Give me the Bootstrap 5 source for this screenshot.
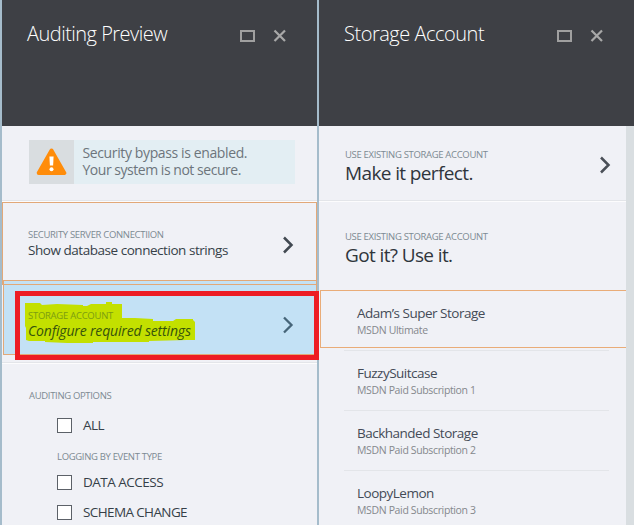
<!DOCTYPE html>
<html lang="en">
<head>
<meta charset="utf-8">
<meta name="viewport" content="width=device-width, initial-scale=1">
<title>Auditing Preview</title>
<link href="https://cdn.jsdelivr.net/npm/bootstrap@5.3.0/dist/css/bootstrap.min.css" rel="stylesheet">
<style>
body{font-family:"Open Sans","Noto Sans",sans-serif;background:#f0f1f6;color:#363f48;width:634px;height:525px}
.blade{width:317px;height:525px;border-left:2px solid #a5bccb;background:#f0f1f6}
.blade-head{height:126px;background:#3e4045;padding:20px 30px 0 25px;flex:none}
.blade-title{font-size:20px;line-height:28px;font-weight:300;color:#fff;white-space:nowrap;margin:0;letter-spacing:-.48px}
.t-aud{letter-spacing:-.52px}
.tools{gap:18px;padding-top:9px}
.tools svg{display:block}
.notice{margin:14px 22px 0 27px;height:44px;background:#e3eef3;color:#6d757c;flex:none}
.notice-icon{width:45px;background:#d9dde0}
.notice-text{padding:4px 0 0 8.5px;font-size:14px;line-height:17px;white-space:nowrap;letter-spacing:-.38px}
.n2{letter-spacing:-.47px}
.cap{font-size:9.5px;line-height:12px;color:#7d8a92;white-space:nowrap;letter-spacing:-.33px}
.lead-row{font-size:14px;line-height:17px;white-space:nowrap}
.rule{height:2px;background:#e3e5e9;border-bottom:1px solid #fcfcfd;flex:none}
.rule-a{margin-top:16px}
.rule-b{margin-top:7px}
.tile{border:1px solid #e2a878;flex:none}
.tile-conn{height:83px;padding:26px 22px 0 25px;position:relative;z-index:1}
.tile-conn svg{margin-top:7px}
.l-conn{font-size:13.5px;letter-spacing:-.46px;padding-top:1px}
.tile-store{height:75px;margin:-5px 0 0 1px;background:#c3e1f5;padding:29px 22px 0 24px}
.tile-store svg{margin-top:6px}
.l-store{letter-spacing:-.16px}
.callout-box{position:absolute;left:15px;top:291px;width:304px;height:69px;border:5px solid #ed1c24;z-index:3}
.marker{position:absolute;left:25px;top:302px;z-index:1}
.over{position:relative;z-index:2}
.tile-store .cap{color:#7b9d10;letter-spacing:-.27px}
.tile-store .lead-row{color:#36530c;font-style:italic}
.opts{padding:26px 0 0 27px}
.opt-list{padding-left:28px}
.opt{height:15px;gap:11px;font-size:13.5px;line-height:15px;white-space:nowrap;letter-spacing:-.5px}
.opt .form-check-input{width:15px;height:15px;margin:0;border:1px solid #5c6168;border-radius:0;background:#fff;flex:none}
.o1{margin-top:16px}
.c-log{margin-top:18px}
.o2{margin-top:12px}
.o3{margin-top:15px;letter-spacing:-.62px}
.acct{padding:0 15px 0 26px;flex:none}
.acct-new{height:74px;padding-top:23px}
.acct-new svg{margin-top:7px}
.acct-old{height:88px;padding-top:29px}
.pick{font-size:19px;line-height:24px;color:#2f353c;white-space:nowrap;letter-spacing:-.62px}
.store{height:60px;margin:0 17px 0 25px;border-bottom:1px solid #e3e5e9;padding:14px 0 0 13px;flex:none}
.store-gap{height:3px;padding:0}
.store-name{font-size:13.5px;line-height:17px;color:#444b57;white-space:nowrap;letter-spacing:-.5px}
.store-sub{font-size:10.5px;line-height:16px;color:#85888d;white-space:nowrap;letter-spacing:-.36px}
.track{width:8px;background:#d9dee1}
.store-sel{height:58px;border:1px solid #e9ac78;border-right:0;margin-left:1px;padding:14px 0 0 36px;flex:none}
</style>
<script src="https://cdn.jsdelivr.net/npm/bootstrap@5.3.0/dist/js/bootstrap.bundle.min.js"></script>
</head>
<body class="d-flex overflow-hidden position-relative">
<section class="blade d-flex flex-column">
  <header class="blade-head d-flex justify-content-between align-items-start">
    <h1 class="blade-title t-aud">Auditing Preview</h1>
    <div class="tools d-flex">
      <svg width="15" height="14" viewBox="0 0 15 14"><rect x="1" y="2" width="13" height="10" fill="none" stroke="#a0a0a0" stroke-width="2"/></svg>
      <svg width="14" height="14" viewBox="0 0 14 14"><path d="M1.5 1.5 12 12M12 1.5 1.5 12" fill="none" stroke="#a8a8a8" stroke-width="2.2"/></svg>
    </div>
  </header>
  <div class="notice d-flex">
    <div class="notice-icon d-flex align-items-center justify-content-center">
      <svg width="32" height="28" viewBox="0 0 32 28"><path d="M15.5 2.6 28.3 25H2.7Z" fill="#ff8c0a" stroke="#ff8c0a" stroke-width="4" stroke-linejoin="round"/><path d="M13.4 8.5h4.2l-.5 9h-3.2Z" fill="#fff"/><circle cx="15.5" cy="21.2" r="2" fill="#fff"/></svg>
    </div>
    <div class="notice-text"><div>Security bypass is enabled.</div><div class="n2">Your system is not secure.</div></div>
  </div>
  <div class="rule rule-a"></div>
  <div class="tile tile-conn d-flex justify-content-between align-items-start">
    <div><div class="cap">SECURITY SERVER CONNECTIION</div><div class="lead-row l-conn">Show database connection strings</div></div>
    <svg width="12" height="18" viewBox="0 0 12 18"><path d="M2 1.5 9.5 9 2 16.5" fill="none" stroke="#414951" stroke-width="2.5"/></svg>
  </div>
  <div class="tile tile-store d-flex justify-content-between align-items-start">
    <div class="over"><div class="cap">STORAGE ACCOUNT</div><div class="lead-row l-store">Configure required settings</div></div>
    <svg width="12" height="18" viewBox="0 0 12 18"><path d="M2 1.5 9.5 9 2 16.5" fill="none" stroke="#466579" stroke-width="2.3"/></svg>
  </div>
  <div class="rule rule-b"></div>
  <div class="opts">
    <div class="cap">AUDITING OPTIONS</div>
    <div class="opt-list">
      <label class="opt d-flex align-items-center o1"><input class="form-check-input" type="checkbox"><span>ALL</span></label>
      <div class="cap c-log">LOGGING BY EVENT TYPE</div>
      <label class="opt d-flex align-items-center o2"><input class="form-check-input" type="checkbox"><span>DATA ACCESS</span></label>
      <label class="opt d-flex align-items-center o3"><input class="form-check-input" type="checkbox"><span>SCHEMA CHANGE</span></label>
    </div>
  </div>
</section>
<section class="blade d-flex flex-column">
  <header class="blade-head d-flex justify-content-between align-items-start">
    <h1 class="blade-title">Storage Account</h1>
    <div class="tools d-flex">
      <svg width="15" height="14" viewBox="0 0 15 14"><rect x="1" y="2" width="13" height="10" fill="none" stroke="#a0a0a0" stroke-width="2"/></svg>
      <svg width="14" height="14" viewBox="0 0 14 14"><path d="M1.5 1.5 12 12M12 1.5 1.5 12" fill="none" stroke="#a8a8a8" stroke-width="2.2"/></svg>
    </div>
  </header>
  <div class="d-flex flex-grow-1">
    <div class="flex-grow-1 d-flex flex-column">
      <div class="acct acct-new d-flex justify-content-between align-items-start">
        <div><div class="cap">USE EXISTING STORAGE ACCOUNT</div><div class="pick">Make it perfect.</div></div>
        <svg width="12" height="18" viewBox="0 0 12 18"><path d="M2 1.5 9.5 9 2 16.5" fill="none" stroke="#4a4f57" stroke-width="2.5"/></svg>
      </div>
      <div class="rule"></div>
      <div class="acct acct-old"><div class="cap">USE EXISTING STORAGE ACCOUNT</div><div class="pick">Got it? Use it.</div></div>
      <div class="store-sel"><div class="store-name">Adam’s Super Storage</div><div class="store-sub">MSDN Ultimate</div></div>
      <div class="store store-gap"></div>
      <div class="store"><div class="store-name">FuzzySuitcase</div><div class="store-sub">MSDN Paid Subscription 1</div></div>
      <div class="store"><div class="store-name">Backhanded Storage</div><div class="store-sub">MSDN Paid Subscription 2</div></div>
      <div class="store border-0"><div class="store-name">LoopyLemon</div><div class="store-sub">MSDN Paid Subscription 3</div></div>
    </div>
    <div class="track"></div>
  </div>
</section>
<svg class="marker" width="172" height="42" viewBox="0 0 172 42"><path d="M0 1H15L17 3 32 2 58 3V4H62L66 2 81 2V0H87V2H97V16H110L128 17V19H148L151 17H168V18L170 20V38H162L124 39V40H68V41H42L20 40V39H4L1 38V26L0 24Z" fill="#c3e000"/></svg>
<div class="callout-box"></div>
</body>
</html>
